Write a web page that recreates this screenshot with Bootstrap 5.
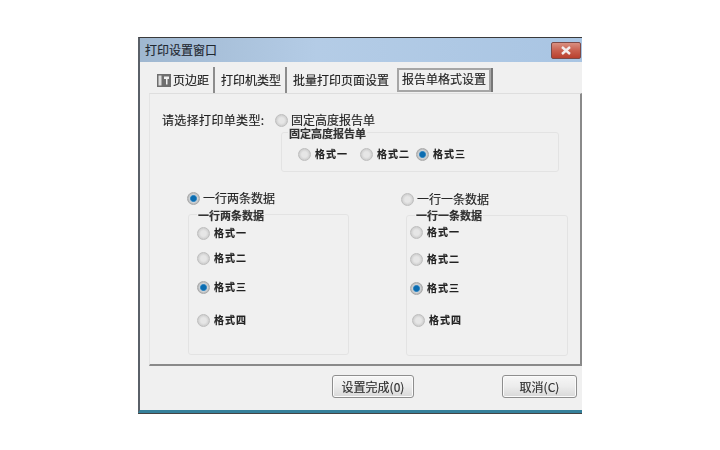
<!DOCTYPE html>
<html lang="zh"><head><meta charset="utf-8"><title>打印设置窗口</title>
<link href="https://cdn.jsdelivr.net/npm/bootstrap@5.3.0/dist/css/bootstrap.min.css" rel="stylesheet">
<style>
html,body{background:#fff;margin:0;height:450px;overflow:hidden}
body{font-family:"Noto Sans CJK SC","Liberation Sans",sans-serif;color:#222;font-size:12px;line-height:16px;-webkit-text-stroke:.15px #222}
.win{margin:37px 0 0 138px;width:444px;height:376px;background:#f0f0f0;border-left:2px solid #5a6068;border-top:1px solid #3a3a3a;border-bottom:3px solid #35809a;filter:blur(.35px);box-shadow:0 1px 0 #444}
.ttl{height:24px;padding:0 0 0 5px;background:linear-gradient(90deg,#9fb7d0,#b4cce6 40%,#a9c5e3);color:#1f2a36}
.xbtn{width:30px;height:17px;margin-right:1px;border:1px solid #7c4a48;border-radius:2px;background:linear-gradient(#d98f80,#c9604f 50%,#b9402e)}
.tabs{height:32px;padding:5px 0 0 17px}
.tb{height:26px;border-right:2px solid #8c8c8c;padding:0 4px 0 0;margin-right:6px;white-space:nowrap}
.tb.pl{border-right-color:transparent;margin-right:2px}
.tb.on{border:2px solid #a6a6a6;height:24px;padding:0 3px 2px 3px;margin:1px 0 0 0;box-shadow:2px 0 0 #777}
.ico{width:14px;height:13px;margin-right:2px;flex:none}
.pane{height:273px;margin:-1px 0 0 9px;border-top:1px solid #dedede;border-left:1px solid #e4e4e4;border-right:2px solid #8a8a8a;border-bottom:2px solid #8a8a8a;padding:18px 0 0 12px}
.ask{width:113px;letter-spacing:.35px}
.rd{appearance:none;-webkit-appearance:none;width:13px;height:13px;border-radius:50%;flex:none;margin:0 4px 0 0;border:1px solid #bdbdbd;background:radial-gradient(circle,#e6e6e6 0 35%,#cfcfcf 70%,#f2f2f2 100%)}
.rd:checked{border-color:#a8a8a8;background:radial-gradient(circle,#0c6cb0 0 30%,#3b8cc4 40%,#d0d4d8 50%,#b0b0b0 78%,#cfcfcf 100%)}
.hd .rd{margin-right:3px}
.top{height:14px;margin-top:1px;line-height:12px}
.frm{border:1px solid #e3e3e3;border-radius:3px}
.lgd{font-size:11px;line-height:10px;font-weight:700;background:#f0f0f0;color:#333;width:max-content;margin:-5px 0 0 6px;padding:0 1px}
.opt{font-size:10px;font-weight:700;letter-spacing:1px;height:16px;white-space:nowrap}
.fix{width:278px;height:40px;margin:5px 0 0 6px}
.fixrow{padding-left:16px;margin-top:8px}
.o2{margin-left:12px}.o3{margin-left:6px}
.cols{margin-top:18px}
.cl{width:224px}
.hdl{padding-left:25px}.hdr{padding-left:15px;margin-top:1px}
.boxl{width:161px;height:141px;margin:8px 0 0 26px;padding-left:8px}
.boxr{width:162px;height:141px;margin:8px 0 0 20px;padding-left:3px}
.boxl .lgd{margin:-5px 0 0 0}.boxr .lgd{margin:-6px 0 0 5px}
.l1{margin-top:5px}.l2{margin-top:9px}.l3{margin-top:13px}.l4{margin-top:17px}
.r1{margin-top:4px}.r2{margin-top:11px}.r3{margin-top:13px}.r4{margin-top:16px;margin-left:2px}
.foot{padding:9px 5px 0 0}
.wbtn{height:23px;border:1px solid #8e8e8e;border-radius:3px;background:linear-gradient(#f6f6f6,#ececec 50%,#d8d8d8);padding:0;color:#333;font-size:12px;line-height:1;box-shadow:inset 0 0 0 1px #fbfbfb}
.b1{width:82px;margin-right:88px}.b2{width:75px}
</style></head><body>
<div class="win d-flex flex-column">
 <div class="ttl d-flex align-items-center justify-content-between">
  <span>打印设置窗口</span>
  <span class="xbtn d-flex align-items-center justify-content-center"><svg width="12" height="9" viewBox="0 0 12 9"><path d="M2 1l8 7M10 1L2 8" stroke="#f3eeee" stroke-width="2.4" fill="none"/></svg></span>
 </div>
 <div class="tabs d-flex align-items-start">
  <div class="tb d-flex align-items-center"><svg class="ico" viewBox="0 0 14 13"><rect width="14" height="13" fill="#6e6e6e"/><rect x="1.5" y="1.5" width="3" height="10" fill="#dcdcdc"/><path d="M7 2.5h5v2.5h-1.5v5.5H9V5H7z" fill="#f0f0f0"/></svg>页边距</div>
  <div class="tb d-flex align-items-center">打印机类型</div>
  <div class="tb pl d-flex align-items-center">批量打印页面设置</div>
  <div class="tb on d-flex align-items-center">报告单格式设置</div>
 </div>
 <div class="pane">
  <div class="d-flex">
   <div class="ask">请选择打印单类型:</div>
   <div>
    <label class="hd top d-flex align-items-center"><input class="rd" type="radio">固定高度报告单</label>
    <div class="frm fix">
     <div class="lgd">固定高度报告单</div>
     <div class="d-flex fixrow">
      <label class="opt d-flex align-items-center"><input class="rd" type="radio">格式一</label>
      <label class="opt o2 d-flex align-items-center"><input class="rd" type="radio">格式二</label>
      <label class="opt o3 d-flex align-items-center"><input class="rd" type="radio" checked>格式三</label>
     </div>
    </div>
   </div>
  </div>
  <div class="d-flex cols">
   <div class="cl">
    <label class="hd hdl d-flex align-items-center"><input class="rd" type="radio" checked>一行两条数据</label>
    <div class="frm boxl">
     <div class="lgd">一行两条数据</div>
     <label class="opt l1 d-flex align-items-center"><input class="rd" type="radio">格式一</label>
     <label class="opt l2 d-flex align-items-center"><input class="rd" type="radio">格式二</label>
     <label class="opt l3 d-flex align-items-center"><input class="rd" type="radio" checked>格式三</label>
     <label class="opt l4 d-flex align-items-center"><input class="rd" type="radio">格式四</label>
    </div>
   </div>
   <div>
    <label class="hd hdr d-flex align-items-center"><input class="rd" type="radio">一行一条数据</label>
    <div class="frm boxr">
     <div class="lgd">一行一条数据</div>
     <label class="opt r1 d-flex align-items-center"><input class="rd" type="radio">格式一</label>
     <label class="opt r2 d-flex align-items-center"><input class="rd" type="radio">格式二</label>
     <label class="opt r3 d-flex align-items-center"><input class="rd" type="radio" checked>格式三</label>
     <label class="opt r4 d-flex align-items-center"><input class="rd" type="radio">格式四</label>
    </div>
   </div>
  </div>
 </div>
 <div class="foot d-flex justify-content-end">
  <button class="wbtn b1" type="button">设置完成(0)</button>
  <button class="wbtn b2" type="button">取消(C)</button>
 </div>
</div>
<script src="https://cdn.jsdelivr.net/npm/bootstrap@5.3.0/dist/js/bootstrap.bundle.min.js"></script>
</body></html>
